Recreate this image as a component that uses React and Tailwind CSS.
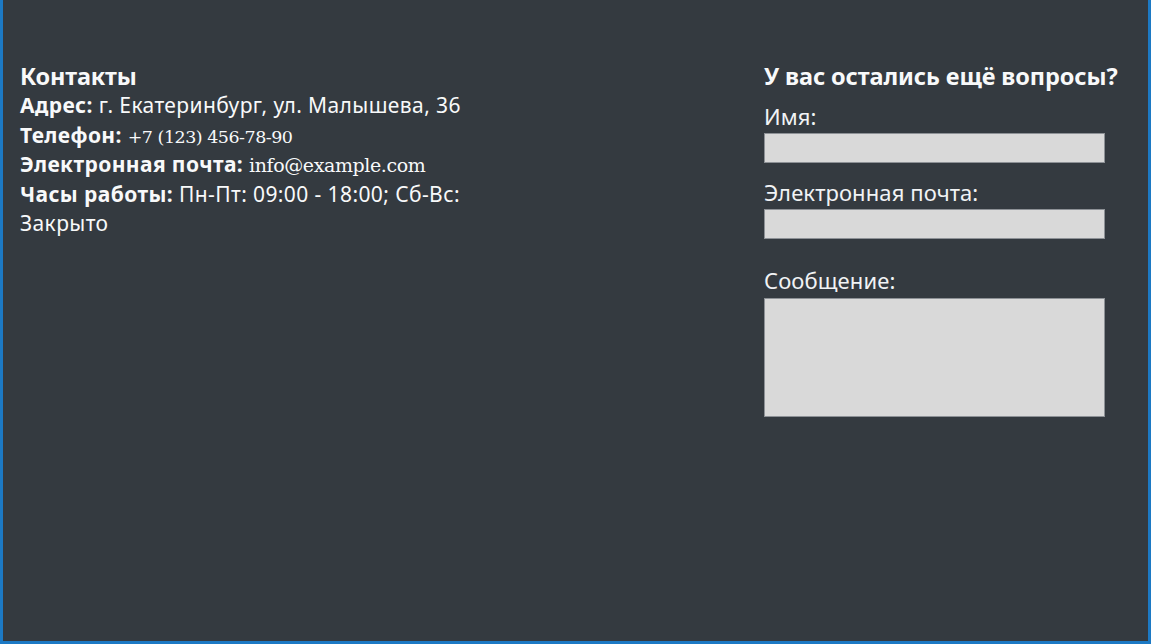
const sans = { fontFamily: '"Noto Sans", "Open Sans", sans-serif' };

function Field({ label, className = '', tall = false }) {
    return (
        <div className={className}>
            <label className="block text-[22px] leading-[30px] tracking-[0.1px] text-[#f1f3f5]">{label}</label>
            {tall ? (
                <textarea className="block w-[341px] h-[119px] mt-[3px] bg-[#d9d9d9] border border-[#8d9196] resize-none" />
            ) : (
                <input type="text" className="block w-[341px] h-[30px] mt-[2px] bg-[#d9d9d9] border border-[#8d9196]" />
            )}
        </div>
    );
}

export default function App() {
    return (
        <div
            className="h-[644px] w-full bg-[#343a40] border-x-[3px] border-b-[3px] border-[#1c79c4] text-[#f8f9fa]"
            style={sans}
        >
            <div className="flex justify-between pt-[61px] pl-[17px]">
                {/* Contacts */}
                <div className="w-[462px] text-[21px] leading-[29.5px] tracking-[0.4px]">
                    <h2 className="text-[23.5px] font-bold leading-[30px] tracking-[-0.2px]">Контакты</h2>
                    <p>
                        <b className="font-bold">Адрес:</b> г. Екатеринбург, ул. Малышева, 36
                    </p>
                    <p>
                        <b className="font-bold">Телефон:</b>{' '}
                        <span className="font-['DejaVu_Serif',serif] text-[17.5px] leading-none tracking-[-0.5px]">+7 (123) 456-78-90</span>
                    </p>
                    <p>
                        <b className="font-bold">Электронная почта:</b>{' '}
                        <span className="font-['DejaVu_Serif',serif] text-[19px] leading-none tracking-[-0.4px]">info@example.com</span>
                    </p>
                    <p>
                        <b className="font-bold">Часы работы:</b> <span>Пн-Пт: 09:00 - 18:00; Сб-Вс:</span> <span>Закрыто</span>
                    </p>
                </div>

                {/* Feedback form */}
                <form className="w-[384px] pr-[3px]">
                    <h2 className="text-[23.5px] font-bold leading-[30px] tracking-[-0.1px]">У вас остались ещё вопросы?</h2>
                    <Field label="Имя:" className="mt-[10px]" />
                    <Field label="Электронная почта:" className="mt-[14px]" />
                    <Field label="Сообщение:" className="mt-[26px]" tall />
                </form>
            </div>
        </div>
    );
}
